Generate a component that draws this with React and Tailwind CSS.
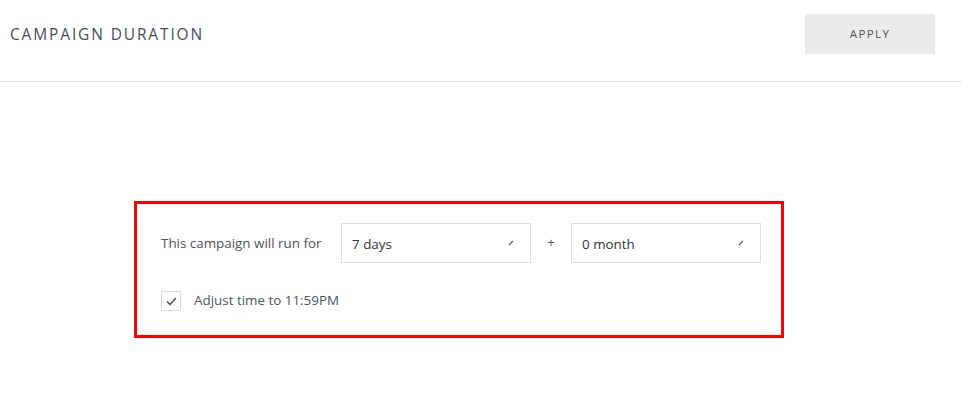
export default function App() {
    const font = { fontFamily: '"Open Sans", "Liberation Sans", sans-serif' };

    return (
        <div className="w-[962px] h-[393px] bg-white text-[#4a4a4a]" style={font}>
            {/* Header */}
            <div className="h-[82px] flex items-start justify-between border-b border-[#e1e1e1]">
                <h1 className="pl-[10px] pt-[23px] text-[15.5px] leading-[22px] tracking-[0.12em] text-[#45505c] font-normal">
                    CAMPAIGN DURATION
                </h1>
                <button className="mt-[14px] mr-[27px] w-[130px] h-[40px] bg-[#ebebeb] text-[11.5px] tracking-[0.12em] text-[#555]">
                    APPLY
                </button>
            </div>

            {/* Body */}
            <div className="pt-[119px] pl-[134px]">
                <div className="w-[650px] h-[137px] border-[3px] border-[#ff0000] pl-[24px] pt-[19px]">
                    <div className="flex items-center">
                        <span className="w-[180px] text-[13.4px] text-[#4d5560]">This campaign will run for</span>
                        <Select value="7 days" />
                        <span className="w-[40px] text-center text-[13px] text-[#555]">+</span>
                        <Select value="0 month" />
                    </div>
                    <label className="mt-[28px] flex items-center">
                        <span className="w-[20px] h-[20px] border border-[#dcdcdc] flex items-center justify-center">
                            <svg width="11" height="9" viewBox="0 0 11 9" fill="none">
                                <path d="M1 4.5 L4 7.5 L10 1" stroke="#444" strokeWidth="1.3" />
                            </svg>
                        </span>
                        <span className="ml-[13px] text-[13.4px] text-[#4d5560] -mt-[2px]">Adjust time to 11:59PM</span>
                    </label>
                </div>
            </div>
        </div>
    );
}

function Select({ value }) {
    return (
        <div className="w-[190px] h-[40px] border border-[#dedede] flex items-center justify-between pl-[10px] pr-[16px]">
            <span className="text-[13.4px] text-[#333] mt-[2px]">{value}</span>
            <svg width="6" height="6" viewBox="0 0 6 6">
                <path d="M1 5 L5 1" stroke="#555" strokeWidth="1.1" />
            </svg>
        </div>
    );
}
